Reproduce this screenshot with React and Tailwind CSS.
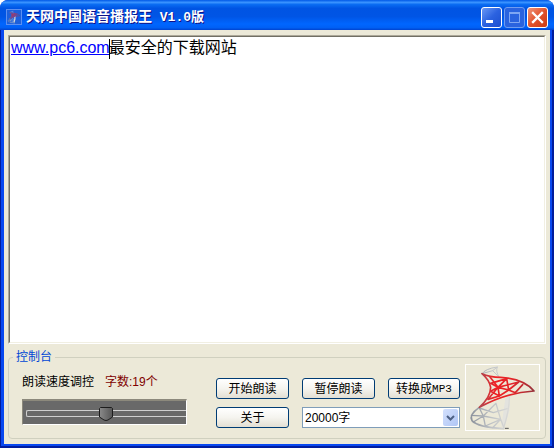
import { useState } from 'react';

const WORD_LIMITS = ['20000字', '10000字', '5000字'];

// 网状徽标：上半部红色，其余为银灰色
function MeshLogo({ className }) {
  return (
    <svg viewBox="18 21 219 195" className={className} fill="none" strokeLinecap="round" strokeLinejoin="round" aria-hidden="true">
      <defs>
        <linearGradient id="meshRed" x1="66" y1="0" x2="222" y2="0" gradientUnits="userSpaceOnUse">
          <stop offset="0" stopColor="#b8444a" />
          <stop offset="0.25" stopColor="#ee2024" />
          <stop offset="0.6" stopColor="#e2262a" />
          <stop offset="1" stopColor="#96323a" />
        </linearGradient>
        <linearGradient id="meshGrey" x1="32" y1="0" x2="150" y2="0" gradientUnits="userSpaceOnUse">
          <stop offset="0" stopColor="#8c929c" />
          <stop offset="0.5" stopColor="#bcc0c4" />
          <stop offset="1" stopColor="#dcdcd8" />
        </linearGradient>
      </defs>
      <path fill="#e3e3de" d="M136 122 L150 108 L148 158 L134 204 L124 206 Z" />
      <g stroke="url(#meshGrey)">
        <path strokeWidth="3" d="M66 47 Q76 32 112 27 Q106 40 118 58 M66 47 L98 38 L112 27 M98 38 L116 56" />
        <path strokeWidth="5" d="M58 148 Q26 170 36 188 Q54 208 130 212" />
        <path strokeWidth="4" d="M130 212 Q148 160 149 110" />
        <path strokeWidth="4" d="M58 150 L70 174 L40 192 M70 174 L34 172 M70 174 L108 136 M70 174 L76 204 M70 174 L122 184 M58 150 L100 164 L142 152 M108 136 L122 184 L98 209 M122 184 L132 210 M122 184 L76 204" />
      </g>
      <g stroke="url(#meshRed)">
        <path strokeWidth="5" d="M66 47 Q88 57 122 58 Q192 62 222 99 Q136 104 58 148 Q92 118 92 88 Q88 66 66 47 Z" />
        <path strokeWidth="5" d="M90 57 L114 88 L140 62 L92 76 M92 76 L114 88 L92 100 M114 88 L84 124 M114 88 L146 96 L176 72 L114 88 M140 62 L146 96 L118 114 L114 88 M188 80 L166 104 L146 96 M92 100 L118 114 L84 124" />
      </g>
      <path stroke="#555" strokeWidth="3" d="M136 211 H145" />
    </svg>
  );
}

function TitleButton({ label, className, children }) {
  return (
    <button
      type="button"
      aria-label={label}
      className={`h-[21px] w-[21px] rounded-[3px] border ${className}`}
    >
      <svg viewBox="0 0 19 19" className="block h-full w-full" fill="none">
        {children}
      </svg>
    </button>
  );
}

function XpButton({ children }) {
  return (
    <button
      type="button"
      className="flex h-[21px] w-full items-center justify-center rounded-[3px] border border-[#003c74] bg-linear-to-b from-white via-[#f5f4ef] to-[#e3dfd3] text-xs leading-4 text-black"
    >
      {children}
    </button>
  );
}

function SpeedSlider() {
  const [speed, setSpeed] = useState(51);

  return (
    <div className="relative flex h-[26px] w-[165px] items-center border-t-2 border-r border-b border-l border-t-[#8c897c] border-r-white border-b-white border-l-[#8c897c] bg-[#696969] pt-px pl-[3px]">
      <div className="h-[7px] w-full rounded-l-[2px] border border-r-0 border-[#d0d0d0]" />
      <input
        id="speed"
        type="range"
        min="0"
        max="100"
        value={speed}
        onChange={(e) => setSpeed(Number(e.target.value))}
        className="absolute inset-0 h-full w-full cursor-pointer opacity-0"
      />
      {/* 滑块随数值移动 */}
      <svg
        viewBox="0 0 14 14"
        className="pointer-events-none absolute top-[6px] h-[14px] w-[14px] -translate-x-1/2"
        style={{ left: `${speed}%` }}
      >
        <defs>
          <linearGradient id="thumb" x1="0" y1="0" x2="1" y2="0">
            <stop offset="0" stopColor="#8a8a8a" />
            <stop offset="1" stopColor="#555" />
          </linearGradient>
        </defs>
        <path d="M1.5 .5 H12.5 L13.5 1.5 V10 L9 13 Q7 14 5 13 L.5 10 V1.5 Z" fill="url(#thumb)" stroke="#1c1c1c" />
      </svg>
    </div>
  );
}

export default function App() {
  const [limit, setLimit] = useState(WORD_LIMITS[0]);

  return (
    <div className="flex min-h-screen flex-col overflow-hidden rounded-t-lg bg-[#0831d9] font-['Liberation_Sans','Noto_Sans_CJK_SC',sans-serif] text-black">
      {/* 标题栏 */}
      <header className="flex h-[30px] items-center justify-between bg-[linear-gradient(to_bottom,#0058e6_0%,#3a93ff_8%,#0a6cf2_15%,#0054e3_28%,#0055e5_55%,#0066ff_80%,#0060f5_92%,#0043cf_100%)] px-[6px] pt-1">
        <div className="flex items-center gap-1">
          <span className="h-4 w-4 border border-[#5c8ff0] bg-[#1c60dc]">
            <MeshLogo className="h-full w-full" />
          </span>
          <h1 className="text-sm leading-5 font-bold whitespace-pre text-white [text-shadow:1px_1px_#0f1089]">
            天网中国语音播报王
            <span className="font-['Liberation_Mono','Noto_Sans_CJK_SC',monospace] text-[13px]"> V1.0版</span>
          </h1>
        </div>
        <div className="flex gap-[2px]">
          <TitleButton label="最小化" className="border-white bg-linear-to-br from-[#6a97f5] via-[#2b62e0] to-[#1c4fd0]">
            <path d="M4 13.5 H11" stroke="#fff" strokeWidth="3" />
          </TitleButton>
          <TitleButton label="最大化" className="border-[#6f9cf0] bg-[#2a63df]">
            <path d="M4.5 5 V14.5 H14.5 V5" stroke="#7ea6f3" />
            <path d="M4 5 H15" stroke="#7ea6f3" strokeWidth="2" />
          </TitleButton>
          <TitleButton label="关闭" className="border-white bg-linear-to-br from-[#ee9378] via-[#e2532c] to-[#cc3a10]">
            <path d="M5 5 L14 14 M14 5 L5 14" stroke="#fff" strokeWidth="2.3" strokeLinecap="square" />
          </TitleButton>
        </div>
      </header>

      <div className="flex flex-1 flex-col border-r-2 border-b-2 border-l border-[#001c9e]">
        <main className="flex flex-1 flex-col border-r-2 border-b-2 border-l-[3px] border-[#0848f0] bg-[#ece9d8] px-1 pt-[5px] pb-[5px]">
          {/* 朗读文本 */}
          <div className="flex flex-1 flex-col border border-t-[#aca899] border-r-white border-b-white border-l-[#aca899]">
            <div
              role="textbox"
              aria-label="朗读文本"
              aria-multiline="true"
              tabIndex={0}
              className="flex-1 border border-t-[#716f64] border-r-[#f1efe2] border-b-[#f1efe2] border-l-[#716f64] bg-white pl-px text-base leading-[22px]"
            >
              <a href="http://www.pc6.com" className="text-[#0000ff] underline">www.pc6.com</a>
              <span className="-mx-px inline-block h-5 w-px bg-black align-middle" />
              最安全的下载网站
            </div>
          </div>

          {/* 控制台 */}
          <fieldset className="mt-[6px] rounded-[4px] border border-[#d0d0bf] pb-[7px]">
            <legend className="ml-1 px-[3px] text-xs leading-[14px] text-[#0046d5]">控制台</legend>
            <div className="flex items-start justify-between pr-[5px] pl-[13px]">
              <div className="pt-[10px]">
                <div className="flex gap-[11px] text-xs leading-4">
                  <label htmlFor="speed">朗读速度调控</label>
                  <output className="text-[#800000]">字数:19个</output>
                </div>
                <div className="mt-[9px]">
                  <SpeedSlider />
                </div>
              </div>
              <div className="flex items-start gap-[5px]">
                <div className="grid grid-cols-[73px_73px_72px] gap-x-[13px] gap-y-2 pt-[14px]">
                  <XpButton>开始朗读</XpButton>
                  <XpButton>暂停朗读</XpButton>
                  <XpButton>
                    转换成<span className="font-['Liberation_Mono',monospace] text-[11px]">MP3</span>
                  </XpButton>
                  <XpButton>关于</XpButton>
                  <div className="relative col-span-2">
                    <select
                      aria-label="字数上限"
                      value={limit}
                      onChange={(e) => setLimit(e.target.value)}
                      className="block h-[21px] w-full appearance-none border border-[#7f9db9] bg-white pl-[2px] text-xs leading-4"
                    >
                      {WORD_LIMITS.map((item) => (
                        <option key={item}>{item}</option>
                      ))}
                    </select>
                    <span className="pointer-events-none absolute top-[2px] right-[2px] flex h-[17px] w-[15px] items-center justify-center rounded-[2px] bg-linear-to-br from-[#d3e0fd] to-[#b0c6f5]">
                      <svg viewBox="0 0 9 6" className="h-[6px] w-[9px]" fill="none">
                        <path d="M1 1 L4.5 4.5 L8 1" stroke="#4d6185" strokeWidth="2" />
                      </svg>
                    </span>
                  </div>
                </div>
                <div className="h-[67px] w-[75px] border border-white">
                  <MeshLogo className="h-full w-full" />
                </div>
              </div>
            </div>
          </fieldset>
        </main>
      </div>
    </div>
  );
}
